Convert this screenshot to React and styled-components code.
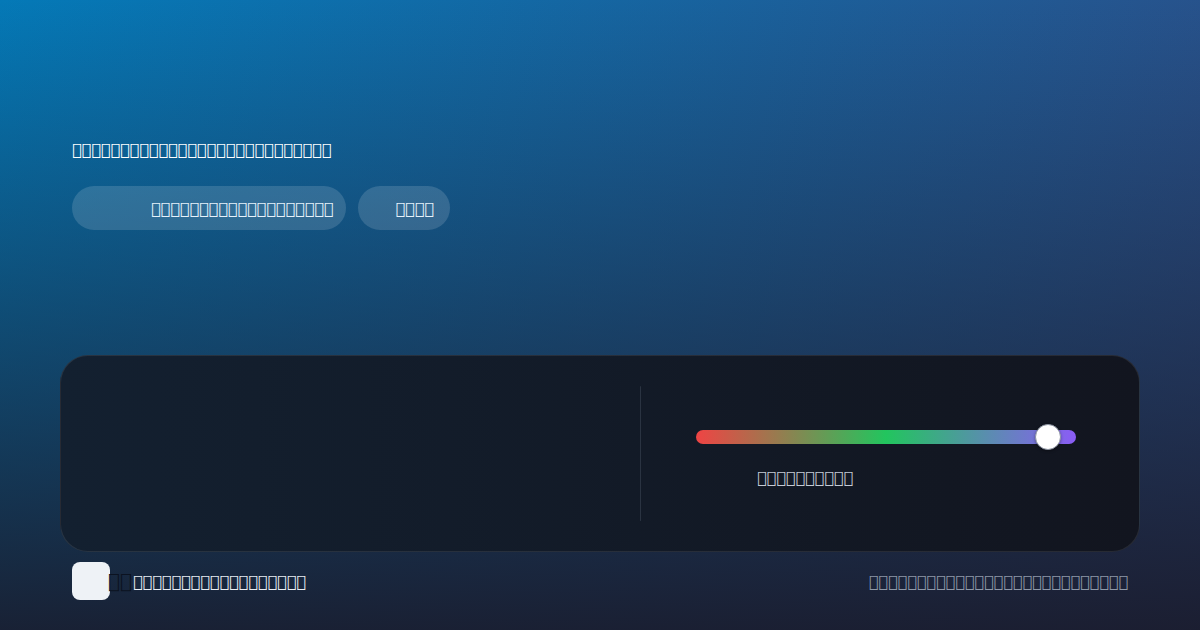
import React from "react";
import { styled, createGlobalStyle } from "styled-components";

const GlobalStyle = createGlobalStyle`
  * {
    margin: 0;
    padding: 0;
    box-sizing: border-box;
  }

  html, body {
    width: 1200px;
    height: 630px;
    overflow: hidden;
  }

  body {
    font-family: 'DejaVu Sans', sans-serif;
    background:
      linear-gradient(180deg, rgba(26, 26, 42, 0) 0%, rgba(26, 26, 42, 0.92) 100%),
      linear-gradient(100deg, #0479b7 0%, #2a4f88 100%);
    color: #ffffff;
  }
`;

const Page = styled.main`
  width: 1200px;
  height: 630px;
  display: flex;
  flex-direction: column;
  padding: 0 60px;
`;

const Hero = styled.section`
  padding: 141px 12px 0;
  display: flex;
  flex-direction: column;
  gap: 27px;
`;

const Title = styled.h1`
  font-size: 16px;
  font-weight: normal;
  line-height: 18px;
  color: #ffffff;
`;

const Actions = styled.div`
  display: flex;
  gap: 12px;
`;

const Pill = styled.button`
  height: 44px;
  border: none;
  border-radius: 22px;
  background: rgba(255, 255, 255, 0.14);
  color: #e6f2fb;
  font-family: 'DejaVu Sans', sans-serif;
  font-size: 16px;
  padding: ${(p) => p.$pad};
  white-space: nowrap;
`;

const Card = styled.section`
  margin-top: 125px;
  height: 197px;
  border-radius: 28px;
  border: 1px solid rgba(255, 255, 255, 0.09);
  background: linear-gradient(90deg, #132030 0%, #12151f 100%);
  padding: 30px;
  display: grid;
  grid-template-columns: 549px 1px 1fr;
`;

const Divider = styled.div`
  background: #2a3341;
  border-radius: 1px;
`;

const SliderPanel = styled.div`
  padding: 44px 33px 0 55px;
  display: flex;
  flex-direction: column;
  gap: 25px;
`;

const Track = styled.div`
  position: relative;
  height: 14px;
  border-radius: 7px;
  background: linear-gradient(90deg, #ef4444 0%, #22c55e 50%, #8b5cf6 100%);
`;

const Thumb = styled.div`
  position: absolute;
  top: 50%;
  width: 26px;
  height: 26px;
  margin: -13px 0 0 -13px;
  border-radius: 50%;
  background: #ffffff;
  border: 1px solid #8b93a1;
  box-shadow: 0 1px 3px rgba(0, 0, 0, 0.35);
`;

const SliderLabel = styled.span`
  margin-left: 61px;
  font-size: 16px;
  line-height: 18px;
  color: #c4cbd6;
  white-space: nowrap;
`;

const Footer = styled.footer`
  margin-top: 10px;
  padding: 0 12px;
  display: flex;
  align-items: center;
`;

const Logo = styled.div`
  flex: none;
  width: 38px;
  min-width: 0;
  height: 38px;
  border-radius: 8px;
  background: #eef2f6;
  display: flex;
  align-items: center;
  padding-left: 36px;
  overflow: visible;
  font-size: 20px;
  color: #0b1220;
  white-space: nowrap;
`;

const Brand = styled.span`
  margin-left: 23px;
  font-size: 16px;
  color: #e8edf3;
  white-space: nowrap;
`;

const Note = styled.span`
  margin-left: auto;
  font-size: 16px;
  color: #8e98a8;
  white-space: nowrap;
`;

const value = 92.6;

export default function App() {
  return (
    <>
      <GlobalStyle />
      <Page>
        <Hero>
          <Title>{"\uE000\uE001\uE002\uE003\uE004\uE005\uE006\uE007\uE008\uE009\uE00A\uE00B\uE00C\uE00D\uE00E\uE00F\uE010\uE011\uE012\uE013\uE014\uE015\uE016\uE017\uE018\uE019\uE01A"}</Title>
          <Actions>
            <Pill $pad="0 13px 0 79px">{"\uE020\uE021\uE022\uE023\uE024\uE025\uE026\uE027\uE028\uE029\uE02A\uE02B\uE02C\uE02D\uE02E\uE02F\uE030\uE031\uE032"}</Pill>
            <Pill $pad="0 16px 0 37px">{"\uE040\uE041\uE042\uE043"}</Pill>
          </Actions>
        </Hero>
        <Card>
          <div />
          <Divider />
          <SliderPanel>
            <Track>
              <Thumb style={{ left: `${value}%` }} />
            </Track>
            <SliderLabel>{"\uE050\uE051\uE052\uE053\uE054\uE055\uE056\uE057\uE058\uE059"}</SliderLabel>
          </SliderPanel>
        </Card>
        <Footer>
          <Logo>{"\uE060\uE061"}</Logo>
          <Brand>{"\uE070\uE071\uE072\uE073\uE074\uE075\uE076\uE077\uE078\uE079\uE07A\uE07B\uE07C\uE07D\uE07E\uE07F\uE080\uE081"}</Brand>
          <Note>{"\uE090\uE091\uE092\uE093\uE094\uE095\uE096\uE097\uE098\uE099\uE09A\uE09B\uE09C\uE09D\uE09E\uE09F\uE0A0\uE0A1\uE0A2\uE0A3\uE0A4\uE0A5\uE0A6\uE0A7\uE0A8\uE0A9\uE0AA"}</Note>
        </Footer>
      </Page>
    </>
  );
}
